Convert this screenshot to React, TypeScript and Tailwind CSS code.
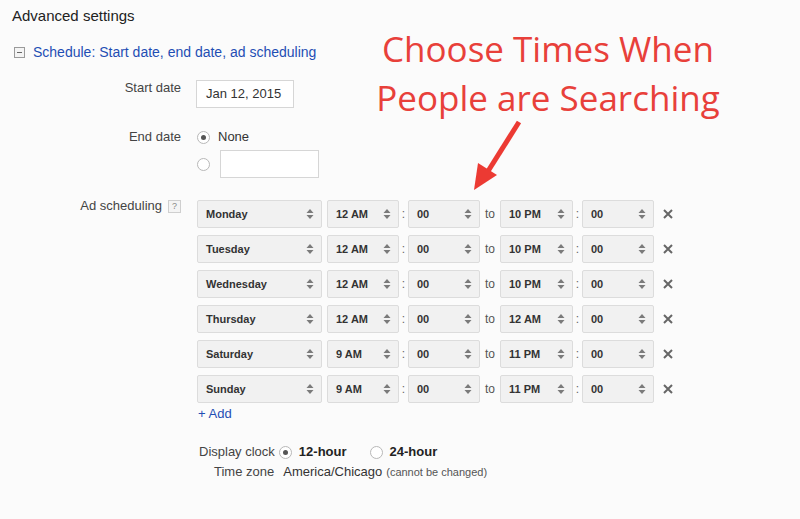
import React from "react";

type Row = { day: string; fromH: string; toH: string };

const rows: Row[] = [
  { day: "Monday", fromH: "12 AM", toH: "10 PM" },
  { day: "Tuesday", fromH: "12 AM", toH: "10 PM" },
  { day: "Wednesday", fromH: "12 AM", toH: "10 PM" },
  { day: "Thursday", fromH: "12 AM", toH: "12 AM" },
  { day: "Saturday", fromH: "9 AM", toH: "11 PM" },
  { day: "Sunday", fromH: "9 AM", toH: "11 PM" },
];

function Arrows() {
  return (
    <svg width="8" height="12" viewBox="0 0 8 12" className="shrink-0">
      <path d="M4 1 L7.5 5 H0.5 Z" fill="#7a7a7a" />
      <path d="M4 11 L7.5 7 H0.5 Z" fill="#7a7a7a" />
    </svg>
  );
}

function Select({ value, w }: { value: string; w: string }) {
  return (
    <div
      className={`${w} h-[28px] flex items-center justify-between pl-[8px] pr-[7px] bg-[#f1f1f1] border border-[#dcdcdc] rounded-[2px] text-[11px] font-bold text-[#333]`}
    >
      <span>{value}</span>
      <Arrows />
    </div>
  );
}

function Radio({ checked }: { checked?: boolean }) {
  return (
    <span className="w-[13px] h-[13px] rounded-full border border-[#b8b8b8] bg-white flex items-center justify-center shrink-0">
      {checked && <span className="w-[5px] h-[5px] rounded-full bg-[#555]" />}
    </span>
  );
}

function Label({ children }: { children: React.ReactNode }) {
  return <div className="w-[181px] text-right text-[13px] text-[#444] shrink-0">{children}</div>;
}

export default function App() {
  return (
    <div
      className="relative w-[800px] h-[519px] bg-[#fbfbfb] text-[#222] overflow-hidden"
      style={{ fontFamily: '"Liberation Sans", Arial, sans-serif' }}
    >
      <div className="pl-[12px] pt-[6px] text-[15px] leading-[20px] text-[#222]">Advanced settings</div>

      <div className="flex items-center pl-[14px] mt-[16px] h-[20px]">
        <span className="w-[11px] h-[11px] border border-[#9a9a9a] bg-[#f4f4f4] flex items-center justify-center">
          <span className="w-[5px] h-[1px] bg-[#666]" />
        </span>
        <span className="ml-[8px] text-[14px] text-[#1f4eb4]">Schedule: Start date, end date, ad scheduling</span>
      </div>

      {/* Start date */}
      <div className="flex items-start mt-[18px]">
        <Label>
          <div className="leading-[16px]">Start date</div>
        </Label>
        <div className="ml-[15px] w-[98px] h-[28px] border border-[#d6d6d6] bg-white flex items-center pl-[9px] text-[13px] text-[#333]">
          Jan 12, 2015
        </div>
      </div>

      {/* End date */}
      <div className="flex items-start mt-[21px]">
        <Label>
          <div className="leading-[16px]">End date</div>
        </Label>
        <div className="ml-[16px] flex flex-col">
          <div className="flex items-center h-[16px]">
            <Radio checked />
            <span className="ml-[8px] text-[13px] text-[#333]">None</span>
          </div>
          <div className="flex items-center mt-[5px]">
            <Radio />
            <div className="ml-[10px] w-[99px] h-[28px] border border-[#d6d6d6] bg-white" />
          </div>
        </div>
      </div>

      {/* Ad scheduling */}
      <div className="flex items-start mt-[20px]">
        <Label>
          <div className="flex items-center justify-end leading-[16px]">
            <span>Ad scheduling</span>
            <span className="ml-[6px] w-[13px] h-[13px] border border-[#cfcfcf] bg-[#f4f4f4] text-[9px] text-[#888] flex items-center justify-center leading-none">
              ?
            </span>
          </div>
        </Label>
        <div className="ml-[16px] mt-[2px] flex flex-col gap-[7px]">
          {rows.map((r) => (
            <div key={r.day} className="flex items-center">
              <Select value={r.day} w="w-[125px]" />
              <div className="ml-[5px]">
                <Select value={r.fromH} w="w-[72px]" />
              </div>
              <span className="w-[9px] text-center text-[12px] text-[#666]">:</span>
              <Select value="00" w="w-[72px]" />
              <span className="w-[20px] text-center text-[12px] text-[#555]">to</span>
              <Select value={r.toH} w="w-[73px]" />
              <span className="w-[9px] text-center text-[12px] text-[#666]">:</span>
              <Select value="00" w="w-[72px]" />
              <svg width="10" height="10" viewBox="0 0 10 10" className="ml-[9px]">
                <path d="M1 1 L9 9 M9 1 L1 9" stroke="#666" strokeWidth="2" />
              </svg>
            </div>
          ))}
          <div className="text-[13px] text-[#1f4eb4] mt-[-4px] ml-[1px] leading-[16px]">+ Add</div>
        </div>
      </div>

      {/* Display clock */}
      <div className="flex items-center mt-[22px] ml-[199px] text-[13px] text-[#444] leading-[16px]">
        <span>Display clock</span>
        <span className="ml-[4px]">
          <Radio checked />
        </span>
        <span className="ml-[7px] font-bold text-[#222]">12-hour</span>
        <span className="ml-[23px]">
          <Radio />
        </span>
        <span className="ml-[7px] font-bold text-[#222]">24-hour</span>
      </div>
      <div className="flex items-center mt-[4px] ml-[214px] text-[13px] text-[#444] leading-[16px]">
        <span>Time zone</span>
        <span className="ml-[9px] text-[#333]">America/Chicago</span>
        <span className="ml-[4px] text-[11px] text-[#555]">(cannot be changed)</span>
      </div>

      {/* Annotation */}
      <div
        className="absolute left-[348px] top-[24px] w-[400px] text-center text-[35px] leading-[49px] text-[#e8403a] whitespace-nowrap"
        style={{ fontFamily: '"Open Sans", sans-serif' }}
      >
        <div>Choose Times When</div>
        <div>People are Searching</div>
      </div>
      <svg className="absolute left-0 top-0" width="800" height="519" viewBox="0 0 800 519">
        <path d="M519 122 L485 176" stroke="#ec3a33" strokeWidth="5" />
        <path d="M474 190 L478 163 L497 175 Z" fill="#ec3a33" />
      </svg>
    </div>
  );
}
